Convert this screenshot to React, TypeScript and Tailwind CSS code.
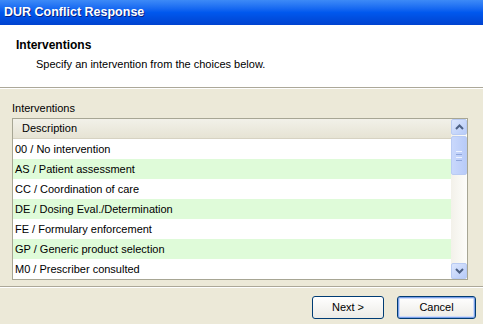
import React from "react";

const rows = [
  "00 / No intervention",
  "AS / Patient assessment",
  "CC / Coordination of care",
  "DE / Dosing Eval./Determination",
  "FE / Formulary enforcement",
  "GP / Generic product selection",
  "M0 / Prescriber consulted",
];

const font = { fontFamily: '"Liberation Sans", Arial, sans-serif' };

function Chevron({ up }: { up?: boolean }) {
  return (
    <svg width="9" height="6" viewBox="0 0 9 6">
      <polyline
        points={up ? "1,5 4.5,1.5 8,5" : "1,1 4.5,4.5 8,1"}
        fill="none"
        stroke="#4d6185"
        strokeWidth="2"
      />
    </svg>
  );
}

function ScrollButton({ up }: { up?: boolean }) {
  return (
    <div className="flex h-[16px] w-[16px] items-center justify-center rounded-[2px] border border-[#b9cbf3] bg-gradient-to-br from-[#dce6fd] to-[#b7cbf8]">
      <Chevron up={up} />
    </div>
  );
}

function Scrollbar() {
  return (
    <div className="flex w-[16px] flex-col bg-gradient-to-r from-[#f3f1ea] to-[#fdfdfa]">
      <ScrollButton up />
      <div className="mt-[1px] flex h-[39px] flex-col items-center justify-center gap-[2px] rounded-[2px] border border-[#b9cbf3] bg-gradient-to-r from-[#c9d8fc] to-[#b8cbf8]">
        <div className="h-px w-[6px] bg-[#eef3fe]" />
        <div className="h-px w-[6px] bg-[#8fa6dc]" />
        <div className="h-px w-[6px] bg-[#eef3fe]" />
        <div className="h-px w-[6px] bg-[#8fa6dc]" />
      </div>
      <div className="flex-1" />
      <ScrollButton />
    </div>
  );
}

export default function App() {
  return (
    <div className="flex h-[324px] w-[483px] flex-col bg-[#ece9d8] text-[11px] text-black" style={font}>
      <div className="flex h-[25px] items-center bg-gradient-to-b from-[#3d8af7] via-[#0058ee] to-[#0042cf] pl-[4px]">
        <span className="text-[12.5px] font-bold text-white [text-shadow:1px_1px_#0a1f80]">DUR Conflict Response</span>
      </div>
      <div className="h-[63px] border-b border-[#aca899] bg-white">
        <div className="pl-[16px] pt-[12px] text-[12px] font-bold leading-[16px]">Interventions</div>
        <div className="pl-[36px] pt-[3px] leading-[16px]">Specify an intervention from the choices below.</div>
      </div>
      <div className="h-px bg-white" />
      <div className="pl-[12px] pt-[12px] leading-[14px]">Interventions</div>
      <div className="ml-[12px] mt-[3px] flex h-[162px] w-[456px] border border-[#a7a694] bg-white">
        <div className="flex flex-1 flex-col">
          <div className="flex h-[20px] items-center border-b border-[#d6d2c2] bg-gradient-to-b from-[#f2f1e9] to-[#e6e3d4] pl-[9px]">
            Description
          </div>
          {rows.map((r, i) => (
            <div
              key={r}
              className={`flex h-[20px] items-center pl-[2px] ${i % 2 === 1 ? "bg-[#dffbd9]" : "bg-white"}`}
            >
              {r}
            </div>
          ))}
        </div>
        <Scrollbar />
      </div>
      <div className="mt-[6px] h-px bg-[#aca899]" />
      <div className="h-px bg-white" />
      <div className="flex justify-end gap-[13px] pr-[7px] pt-[8px]">
        <button className="h-[23px] w-[72px] rounded-[3px] border border-[#003c74] bg-gradient-to-b from-white to-[#ecebe6]">
          Next &gt;
        </button>
        <button className="h-[23px] w-[79px] rounded-[3px] border border-[#003c74] bg-gradient-to-b from-white to-[#ecebe6] shadow-[inset_0_0_0_1px_#7ba0e8,inset_0_0_0_2px_#cfdcf8]">
          Cancel
        </button>
      </div>
    </div>
  );
}
